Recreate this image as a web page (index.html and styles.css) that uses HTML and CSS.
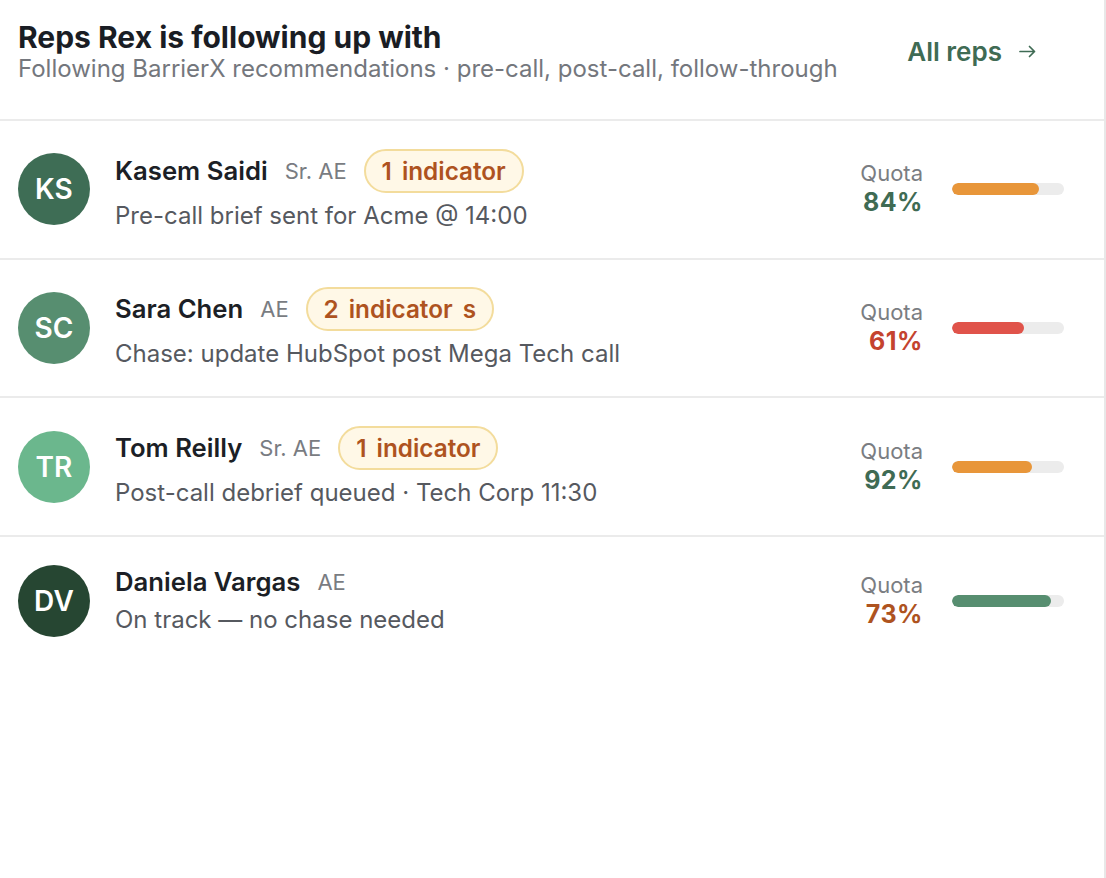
FILE: index.html
```html
<!DOCTYPE html>
<html lang="en">
<head>
<meta charset="utf-8">
<title>Reps Rex is following up with</title>
<link rel="stylesheet" href="styles.css">
</head>
<body>
<section class="panel">
  <header class="panel-head">
    <div class="head-text">
      <h1 class="title">Reps Rex is following up with</h1>
      <p class="subtitle">Following BarrierX recommendations · pre-call, post-call, follow-through</p>
    </div>
    <a class="all-link" href="#">All reps
      <svg class="arrow" width="17" height="13" viewBox="0 0 17 13" aria-hidden="true"><path d="M1 6.5H15.5M10.5 1.5L15.5 6.5L10.5 11.5" fill="none" stroke="currentColor" stroke-width="1.7" stroke-linecap="round" stroke-linejoin="round"/></svg>
    </a>
  </header>

  <ul class="rep-list">
    <li class="rep">
      <div class="avatar av-ks">KS</div>
      <div class="rep-main">
        <div class="rep-line">
          <span class="rep-name">Kasem Saidi</span>
          <span class="rep-role">Sr. AE</span>
          <span class="badge"><span>1</span> <span>indicator</span></span>
        </div>
        <div class="rep-desc">Pre-call brief sent for Acme @ 14:00</div>
      </div>
      <div class="quota">
        <div class="quota-label">Quota</div>
        <div class="quota-val q-green">84%</div>
      </div>
      <div class="bar"><div class="bar-fill fill-orange" style="width:78%"></div></div>
    </li>

    <li class="rep">
      <div class="avatar av-sc">SC</div>
      <div class="rep-main">
        <div class="rep-line">
          <span class="rep-name">Sara Chen</span>
          <span class="rep-role">AE</span>
          <span class="badge"><span>2</span> <span>indicator</span> <span>s</span></span>
        </div>
        <div class="rep-desc">Chase: update HubSpot post Mega Tech call</div>
      </div>
      <div class="quota">
        <div class="quota-label">Quota</div>
        <div class="quota-val q-red">61%</div>
      </div>
      <div class="bar"><div class="bar-fill fill-red" style="width:64%"></div></div>
    </li>

    <li class="rep">
      <div class="avatar av-tr">TR</div>
      <div class="rep-main">
        <div class="rep-line">
          <span class="rep-name">Tom Reilly</span>
          <span class="rep-role">Sr. AE</span>
          <span class="badge"><span>1</span> <span>indicator</span></span>
        </div>
        <div class="rep-desc">Post-call debrief queued · Tech Corp 11:30</div>
      </div>
      <div class="quota">
        <div class="quota-label">Quota</div>
        <div class="quota-val q-green">92%</div>
      </div>
      <div class="bar"><div class="bar-fill fill-orange" style="width:71%"></div></div>
    </li>

    <li class="rep rep-last">
      <div class="avatar av-dv">DV</div>
      <div class="rep-main">
        <div class="rep-line rep-line-plain">
          <span class="rep-name">Daniela Vargas</span>
          <span class="rep-role">AE</span>
        </div>
        <div class="rep-desc">On track — no chase needed</div>
      </div>
      <div class="quota">
        <div class="quota-label">Quota</div>
        <div class="quota-val q-brown">73%</div>
      </div>
      <div class="bar"><div class="bar-fill fill-green" style="width:88%"></div></div>
    </li>
  </ul>
</section>
</body>
</html>
```

FILE: styles.css
```css
* { box-sizing: border-box; }

html, body {
  margin: 0;
  padding: 0;
  background: #ffffff;
}

body {
  font-family: Inter, "Noto Sans", "Liberation Sans", sans-serif;
  color: #1c1f26;
}

.panel {
  width: 1106px;
  min-height: 878px;
  border-right: 2px solid #e8e8e8;
  background: #ffffff;
}

.panel-head {
  display: flex;
  align-items: center;
  justify-content: space-between;
  padding: 19px 68px 36px 18px;
  border-bottom: 2px solid #ebebeb;
}

.title {
  margin: 0;
  font-size: 30px;
  line-height: 36px;
  font-weight: 700;
  color: #1a1d24;
}

.subtitle {
  margin: 0;
  font-size: 24px;
  line-height: 28px;
  color: #74777d;
}

.all-link {
  display: flex;
  align-items: center;
  gap: 17px;
  font-size: 26px;
  font-weight: 600;
  color: #3f6b54;
  text-decoration: none;
}

.arrow { display: block; }

.rep-list {
  list-style: none;
  margin: 0;
  padding: 0;
}

.rep {
  display: flex;
  align-items: center;
  padding: 27.83px 40px 27.83px 18px;
  border-bottom: 2px solid #ebebeb;
}

.rep-last { border-bottom: none; }

.avatar {
  flex: none;
  width: 72px;
  height: 72px;
  border-radius: 50%;
  display: flex;
  align-items: center;
  justify-content: center;
  color: #ffffff;
  font-size: 28px;
  font-weight: 600;
  letter-spacing: 0.2px;
}

.av-ks { background: #3e6d55; }
.av-sc { background: #578e70; }
.av-tr { background: #6bb78d; }
.av-dv { background: #264632; }

.rep-main {
  flex: 1;
  margin-left: 25px;
  display: flex;
  flex-direction: column;
  gap: 9px;
}

.rep-line {
  display: flex;
  align-items: center;
  gap: 17px;
  min-height: 44px;
}

.rep-line-plain { min-height: 30px; }

.rep-name {
  font-size: 25.7px;
  line-height: 30px;
  font-weight: 600;
  color: #1c1f26;
}

.rep-role {
  font-size: 22px;
  line-height: 28px;
  color: #797c82;
}

.badge {
  display: inline-flex;
  align-items: center;
  gap: 10px;
  height: 44px;
  padding: 0 16px;
  border: 2px solid #f3dc9c;
  border-radius: 22px;
  background: #fff8e7;
  color: #ae531f;
  font-size: 24.3px;
  font-weight: 600;
}

.rep-desc {
  font-size: 24px;
  line-height: 28px;
  color: #56595f;
}

.quota {
  flex: none;
  text-align: right;
}

.quota-label {
  font-size: 22px;
  line-height: 27px;
  color: #7a7d82;
}

.quota-val {
  font-size: 25px;
  line-height: 31px;
  font-weight: 700;
  letter-spacing: 0.5px;
}

.q-green { color: #3f6b54; }
.q-red { color: #c4432f; }
.q-brown { color: #ae531f; }

.bar {
  flex: none;
  width: 112px;
  height: 12px;
  margin-left: 29px;
  border-radius: 6px;
  background: #ececec;
  overflow: hidden;
}

.bar-fill {
  height: 100%;
  border-radius: 6px;
}

.fill-orange { background: #e8963a; }
.fill-red { background: #e0534a; }
.fill-green { background: #578e70; }
```
